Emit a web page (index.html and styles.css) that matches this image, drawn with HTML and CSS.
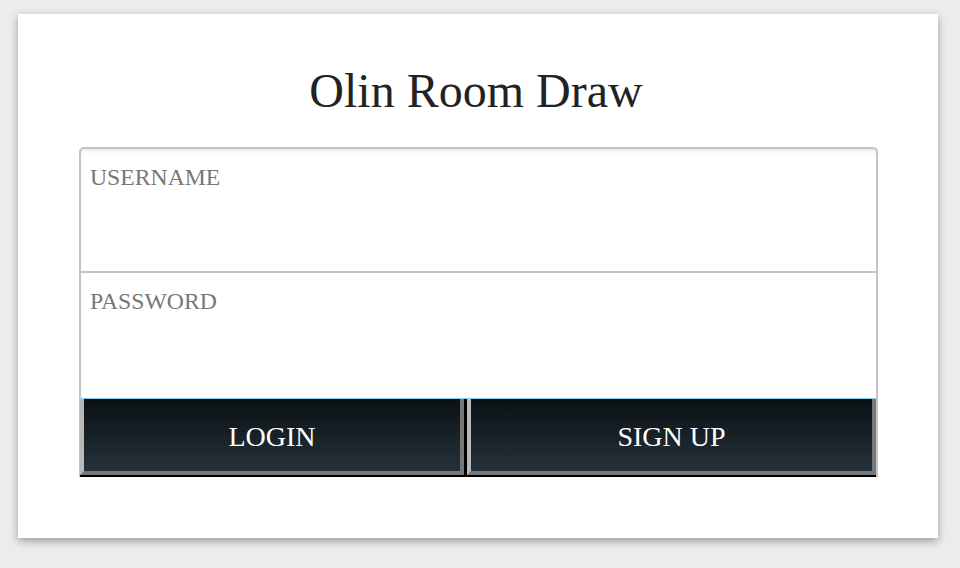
FILE: index.html
```html
<!DOCTYPE html>
<html>
<head>
<meta charset="utf-8">
<title>Olin Room Draw</title>
<link rel="stylesheet" href="styles.css">
</head>
<body>
<div class="card">
  <h1 class="title">Olin Room Draw</h1>
  <form class="login">
    <div class="fields">
      <label class="field">
        <span class="label">USERNAME</span>
        <input class="input" type="text">
      </label>
      <label class="field field-last">
        <span class="label">PASSWORD</span>
        <input class="input" type="password">
      </label>
    </div>
    <div class="buttons">
      <button type="button" class="btn btn-login">LOGIN</button>
      <button type="button" class="btn btn-signup">SIGN UP</button>
    </div>
  </form>
</div>
</body>
</html>
```
FILE: styles.css
```css
html, body {
  margin: 0;
  padding: 0;
  background: #ececec;
  font-family: "Liberation Serif", "Times New Roman", serif;
}
html {
  height: 100%;
}
body {
  min-height: 100%;
  box-sizing: border-box;
  padding: 14px 0 20px 18px;
}
.card {
  width: 920px;
  height: 524px;
  box-sizing: border-box;
  background: #fff;
  box-shadow: 0 3px 8px rgba(0, 0, 0, 0.35);
  padding: 0 60px 0 61px;
  display: flex;
  flex-direction: column;
}
.title {
  margin: 0;
  padding: 53px 5px 0 0;
  height: 133px;
  box-sizing: border-box;
  text-align: center;
  font-weight: normal;
  font-size: 48px;
  line-height: 1;
  color: #222;
}
.login {
  width: 799px;
  display: flex;
  flex-direction: column;
}
.fields {
  border: 2px solid #c4c4c4;
  border-bottom: none;
  border-radius: 5px 5px 0 0;
  box-shadow: inset 0 4px 5px -3px rgba(0, 0, 0, 0.12);
  display: flex;
  flex-direction: column;
}
.field {
  display: flex;
  flex-direction: column;
  height: 124px;
  border-bottom: 2px solid #c4c4c4;
  box-sizing: border-box;
  padding: 17px 9px 0 9px;
}
.field-last {
  height: 126px;
  border-bottom: 1px solid #8ccff0;
}
.label {
  font-size: 23.7px;
  color: #777;
  line-height: 1;
}
.input {
  border: none;
  outline: none;
  background: transparent;
  font: inherit;
  font-size: 22px;
  margin-top: 8px;
  padding: 0;
}
.buttons {
  display: flex;
  gap: 3px;
  background: #000;
  padding-bottom: 2px;
  border-left: 1px solid #c4c4c4;
  border-right: 2px solid #c4c4c4;
}
.btn {
  height: 76px;
  margin: 0;
  border-style: solid;
  border-width: 0 4px 4px 4px;
  border-color: #808080 #777 #777 #b8b8b8;
  background: linear-gradient(#0a1115, #25313a);
  color: #fff;
  font-family: "Liberation Serif", "Times New Roman", serif;
  font-size: 28px;
  padding: 3px 0 0 0;
}
.btn-login {
  width: 384px;
}
.btn-signup {
  flex: 1;
}
```
